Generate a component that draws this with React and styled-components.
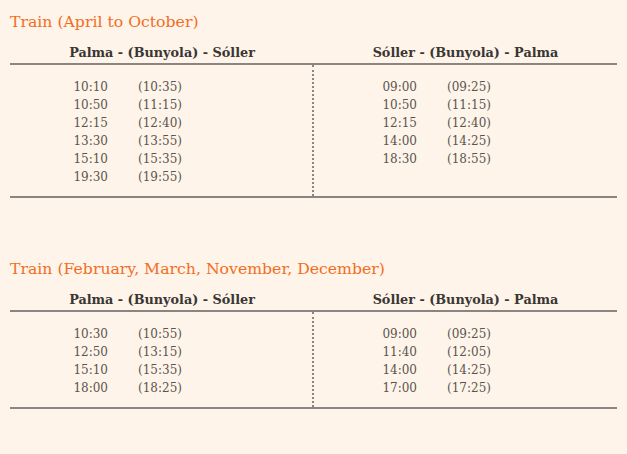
import styled, { createGlobalStyle } from 'styled-components'

const schedules = [
  {
    title: 'Train (April to October)',
    routes: [
      {
        name: 'Palma - (Bunyola) - Sóller',
        times: [
          ['10:10', '(10:35)'],
          ['10:50', '(11:15)'],
          ['12:15', '(12:40)'],
          ['13:30', '(13:55)'],
          ['15:10', '(15:35)'],
          ['19:30', '(19:55)'],
        ],
      },
      {
        name: 'Sóller - (Bunyola) - Palma',
        times: [
          ['09:00', '(09:25)'],
          ['10:50', '(11:15)'],
          ['12:15', '(12:40)'],
          ['14:00', '(14:25)'],
          ['18:30', '(18:55)'],
        ],
      },
    ],
  },
  {
    title: 'Train (February, March, November, December)',
    routes: [
      {
        name: 'Palma - (Bunyola) - Sóller',
        times: [
          ['10:30', '(10:55)'],
          ['12:50', '(13:15)'],
          ['15:10', '(15:35)'],
          ['18:00', '(18:25)'],
        ],
      },
      {
        name: 'Sóller - (Bunyola) - Palma',
        times: [
          ['09:00', '(09:25)'],
          ['11:40', '(12:05)'],
          ['14:00', '(14:25)'],
          ['17:00', '(17:25)'],
        ],
      },
    ],
  },
]

function App() {
  return (
    <>
      <GlobalStyle />
      <Page>
        {schedules.map((schedule) => (
          <Section key={schedule.title}>
            <Title>{schedule.title}</Title>
            <Table>
              {schedule.routes.map((route) => (
                <HeaderCell key={route.name}>{route.name}</HeaderCell>
              ))}
              {schedule.routes.map((route, i) => (
                <BodyCell key={route.name} $divider={i === 0} $offset={i === 0 ? 0 : 5}>
                  {route.times.map(([dep, arr]) => (
                    <TimeRow key={dep}>
                      <Time>{dep}</Time>
                      <Time>{arr}</Time>
                    </TimeRow>
                  ))}
                </BodyCell>
              ))}
            </Table>
          </Section>
        ))}
      </Page>
    </>
  )
}

export default App

const GlobalStyle = createGlobalStyle`
  html, body {
    margin: 0;
    padding: 0;
    background: #fef4e9;
  }
`

const Page = styled.div`
  padding: 11px 10px 40px 10px;
  font-family: 'DejaVu Serif', 'Liberation Serif', serif;
`

const Section = styled.section`
  & + & {
    margin-top: 60px;
  }
`

const Title = styled.h2`
  margin: 0;
  color: #f26d1f;
  font-size: 15.7px;
  font-weight: normal;
  line-height: 22px;
`

const Table = styled.div`
  display: grid;
  grid-template-columns: 304px 1fr;
  margin-top: 9px;
  border-bottom: 2px solid #8a8580;
`

const HeaderCell = styled.div`
  text-align: center;
  font-size: 12.8px;
  font-weight: bold;
  color: #3a3633;
  line-height: 20px;
  padding-top: 1px;
  border-bottom: 2px solid #8a8580;
`

const BodyCell = styled.div`
  padding: 13px 0 10px ${(p) => p.$offset}px;
  border-right: ${(p) => (p.$divider ? '2px dotted #8a8580' : 'none')};
`

const TimeRow = styled.div`
  display: grid;
  grid-template-columns: 98px 74px;
  line-height: 18px;
`

const Time = styled.span`
  text-align: right;
  font-size: 12px;
  color: #5a5550;
  font-variant-numeric: oldstyle-nums;
`
